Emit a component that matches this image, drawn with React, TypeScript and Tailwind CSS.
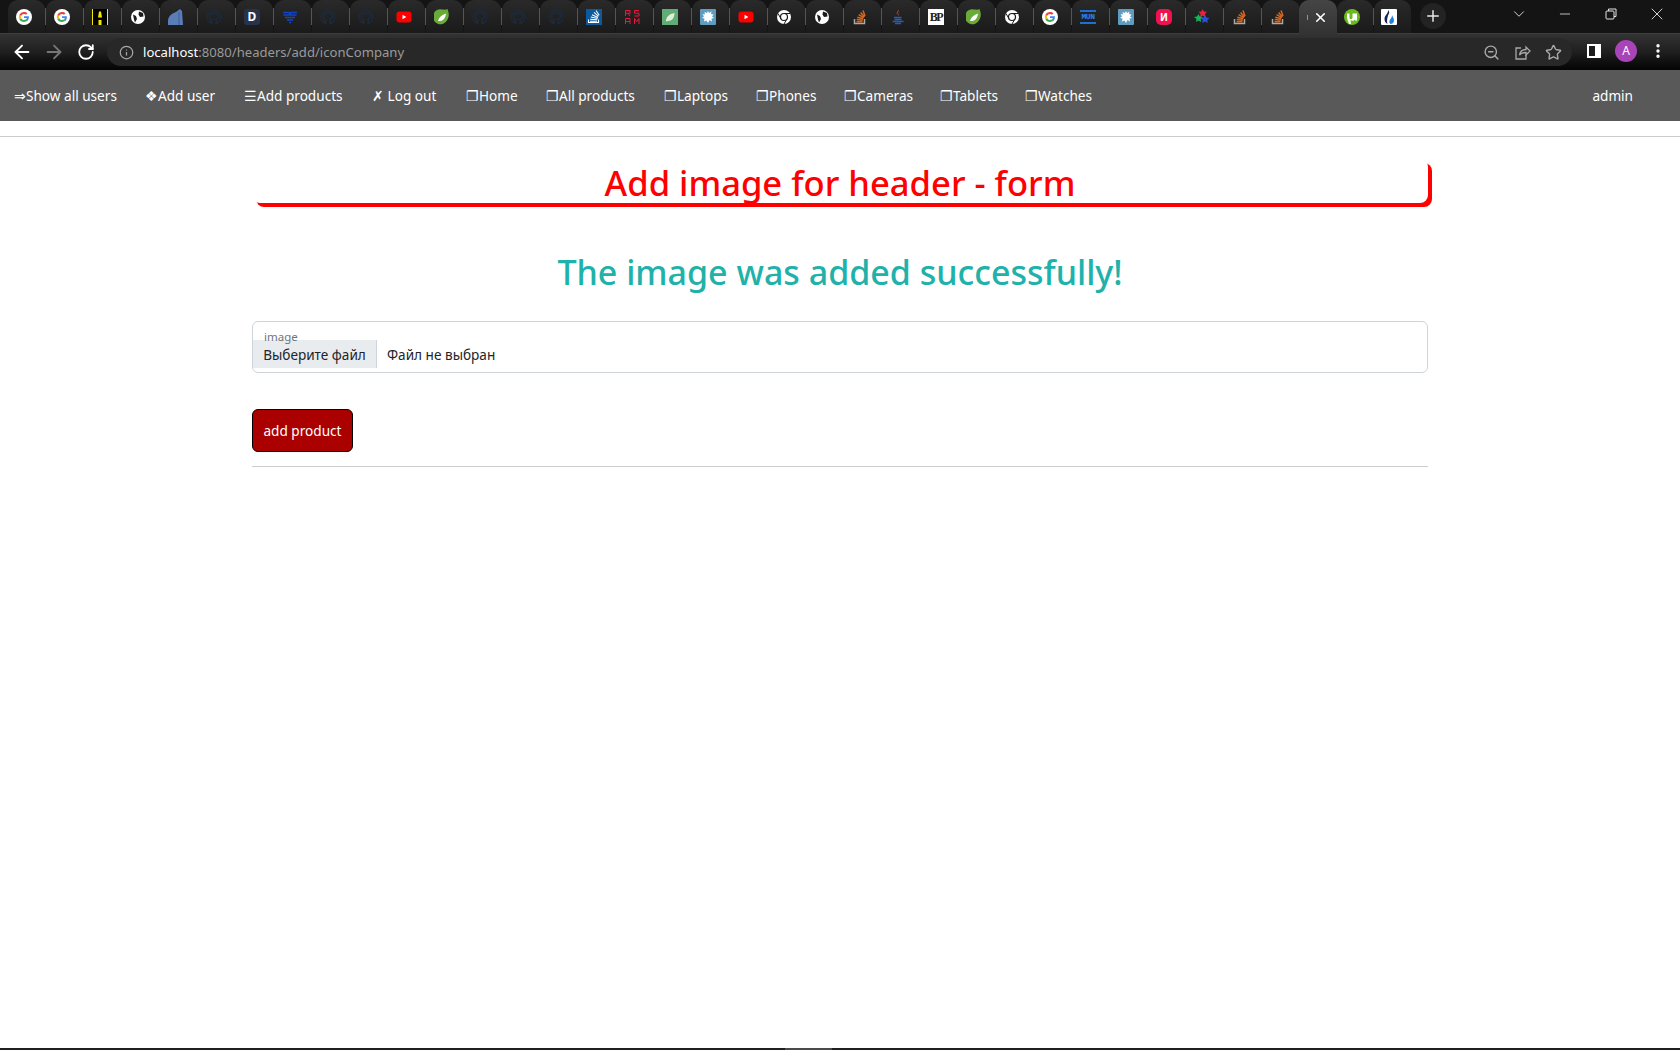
import { ArrowLeft, ArrowRight, RotateCw, Info, ZoomOut, Star, X, Plus, ChevronDown, Minus, MoreVertical } from 'lucide-react';

type IconName =
  | 'google' | 'amazon' | 'globe' | 'blue' | 'github' | 'dev' | 'heart' | 'youtube' | 'spring'
  | 'stackBlue' | 'rsam' | 'leaf' | 'splat' | 'chrome' | 'stack' | 'java' | 'bp' | 'mun' | 'red'
  | 'stars' | 'utorrent' | 'flame';

const tabsBefore: IconName[] = [
  'google', 'google', 'amazon', 'globe', 'blue', 'github', 'dev', 'heart', 'github', 'github',
  'youtube', 'spring', 'github', 'github', 'github', 'stackBlue', 'rsam', 'leaf', 'splat',
  'youtube', 'chrome', 'globe', 'stack', 'java', 'bp', 'spring', 'chrome', 'google', 'mun',
  'splat', 'red', 'stars', 'stack', 'stack',
];

const navItems = [
  { label: '⇒Show all users', width: 'w-[131px]' },
  { label: '❖Add user', width: 'w-[99px]' },
  { label: '☰Add products', width: 'w-[128px]' },
  { label: '✗ Log out', width: 'w-[94px]' },
  { label: '❐Home', width: 'w-[80px]' },
  { label: '❐All products', width: 'w-[118px]' },
  { label: '❐Laptops', width: 'w-[92px]' },
  { label: '❐Phones', width: 'w-[88px]' },
  { label: '❐Cameras', width: 'w-[96px]' },
  { label: '❐Tablets', width: 'w-[85px]' },
  { label: '❐Watches', width: 'w-[92px]' },
];

function StackMark({ color }: { color: string }) {
  return (
    <g stroke={color} strokeWidth="1.5" fill="none">
      <path d="M2.5 10v4.5h10V10" stroke="#a9a9a9" />
      <path d="M4.5 12.7h6M4.7 10.6l6 .6M5.3 8.2l5.9 1.6M6.6 5.7l5.2 3M8.6 3.5l3.9 4.4M11 1.5l2 5.5" />
    </g>
  );
}

function Favicon({ name }: { name: IconName }) {
  switch (name) {
    case 'google':
      return (
        <svg width="16" height="16" viewBox="0 0 16 16">
          <circle cx="8" cy="8" r="8" fill="#fff" />
          <path d="M12.9 8.2c0-.4 0-.7-.1-1H8v1.900h2.800c-.1.700-.5 1.200-1 1.600l1.600 1.200c.9-.9 1.500-2.200 1.500-3.700z" fill="#4285f4" />
          <path d="M8 13c1.400 0 2.500-.5 3.400-1.200L9.800 10.600c-.5.300-1 .5-1.800.5-1.300 0-2.500-.9-2.900-2.100L3.400 10.200C4.200 11.900 6 13 8 13z" fill="#34a853" />
          <path d="M5.100 9c-.2-.6-.2-1.300 0-1.900L3.400 5.800c-.7 1.400-.7 3 0 4.400z" fill="#fbbc05" />
          <path d="M8 4.900c.8 0 1.500.3 2 .8l1.500-1.500C10.600 3.500 9.400 3 8 3 6 3 4.200 4.100 3.400 5.800l1.700 1.300C5.500 5.800 6.700 4.900 8 4.900z" fill="#ea4335" />
        </svg>
      );
    case 'amazon':
      return (
        <svg width="16" height="16" viewBox="0 0 16 16">
          <rect width="16" height="16" fill="#f5e400" />
          <rect x="1" width="14" height="16" fill="#000" />
          <path d="M7 2.500h2l1 6H6zM6.500 11h3v5h-3z" fill="#f5e400" />
        </svg>
      );
    case 'globe':
      return (
        <svg width="16" height="16" viewBox="0 0 16 16">
          <circle cx="8" cy="8" r="7" fill="#fff" />
          <path d="M3 5.500l3 1.500 1 3-2 3.500-1-3zM9 2.500l4 1.500 .5 3.500-3.500.5-1.500-2.500z" fill="#1b1b1b" />
        </svg>
      );
    case 'blue':
      return (
        <svg width="16" height="16" viewBox="0 0 16 16">
          <path d="M0 16V11C1 6 5 4 8 3l4-3 2 2 1 14z" fill="#5a7db8" />
          <path d="M11 3v13" stroke="#3f5f96" strokeWidth="1" />
        </svg>
      );
    case 'github':
      return (
        <svg width="16" height="16" viewBox="0 0 16 16">
          <path d="M8 1a7 7 0 0 0-2.200 13.600v-2.200C3.500 12.900 3 11.500 3 11.500M8 1a7 7 0 0 1 2.200 13.600v-3c0-.7-.3-1.100-.6-1.400 1.800-.2 2.900-1 2.900-3 0-.8-.3-1.400-.7-1.900.1-.3.200-1-.1-1.800-.7 0-1.500.5-1.800.7a7 7 0 0 0-3.800 0C5.800 4.500 5 4 4.300 4c-.3.800-.2 1.500-.1 1.800-.4.500-.7 1.100-.7 1.900 0 2 1.100 2.800 2.900 3-.3.300-.4.600-.5 1" fill="none" stroke="#1d2a3a" strokeWidth="1.500" />
        </svg>
      );
    case 'dev':
      return (
        <span className="flex h-4 w-4 items-center justify-center rounded-[3px] bg-[#28324a] text-[12px] font-bold leading-none text-white">D</span>
      );
    case 'heart':
      return (
        <svg width="16" height="16" viewBox="0 0 16 16">
          <path d="M1 3.500h6l1 1.500 1-1.500h6M1.500 6h13M3 8.500h10M5 11h6M7 13.500h2" stroke="#1045c8" strokeWidth="1.500" fill="none" />
        </svg>
      );
    case 'youtube':
      return (
        <svg width="16" height="16" viewBox="0 0 16 16">
          <rect x="0.500" y="2.500" width="15" height="11" rx="3" fill="#ff0000" />
          <path d="M6.500 5.800v4.400L10.300 8z" fill="#fff" />
        </svg>
      );
    case 'spring':
      return (
        <svg width="16" height="16" viewBox="0 0 16 16">
          <path d="M8 0.500c2 0 4 .5 5.500-.5 1.500 4 2 7-.3 11A7.500 7.500 0 1 1 8 .5z" fill="#6aaa3a" />
          <path d="M4 12c1-4 4-6 8-7.500-.5 4-2 7-6 7.500-.8.100-1.500.2-2 0z" fill="#fff" />
        </svg>
      );
    case 'stackBlue':
      return (
        <svg width="16" height="16" viewBox="0 0 16 16">
          <rect width="16" height="16" fill="#0b5a9e" />
          <g stroke="#fff" strokeWidth="1.100" fill="none">
            <path d="M2.500 10.500v3h10v-3M4 12.300h7M4.200 10.300l7 .5M4.800 8l6.800 1.500M6 5.700l6 2.900M8 3.300l4.500 4M10 1.500l3.200 4.800" />
          </g>
        </svg>
      );
    case 'rsam':
      return (
        <svg width="16" height="16" viewBox="0 0 16 16">
          <g stroke="#f0163c" strokeWidth="1" fill="none">
            <path d="M1.500 7V1.500H6v2.800H1.500M4 4.300L6 7M15 1.500h-4.500v2.700H15V7h-4.500M1.500 15V9.500H6V15M1.500 12.500H6M10.500 15V9.500l2.200 3 2.300-3V15" />
          </g>
        </svg>
      );
    case 'leaf':
      return (
        <svg width="16" height="16" viewBox="0 0 16 16">
          <rect width="16" height="16" fill="#63ab74" />
          <path d="M4 12.500c0-4.500 3-7.500 8.500-8.500 0 5-2.500 8-6.500 8-.7 0-1.400.2-2 .5z" fill="#dcefdc" />
        </svg>
      );
    case 'splat':
      return (
        <svg width="16" height="16" viewBox="0 0 16 16">
          <rect width="16" height="16" rx="1" fill="#5f9dc0" />
          <path d="M8 2l1 2 2.500-1.500-.5 2.500 2.500.5-1.500 2L14 9l-2.500.5.5 3-2.500-1.500L8 14l-1.500-2.500L4 12.500l.5-3L2 9l2-1.500L2.500 5l2.500.5L4.500 3l2.500 1z" fill="#fff" />
        </svg>
      );
    case 'chrome':
      return (
        <svg width="16" height="16" viewBox="0 0 16 16">
          <circle cx="8" cy="8" r="7" fill="#fff" />
          <circle cx="8" cy="8" r="3.500" fill="#fff" stroke="#1c1c1c" strokeWidth="1.200" />
          <path d="M8 4.500h6M5 9.800L2 4.500M11 9.800L8 15" stroke="#1c1c1c" strokeWidth="1" />
        </svg>
      );
    case 'stack':
      return (
        <svg width="16" height="16" viewBox="0 0 16 16">
          <StackMark color="#d9661c" />
        </svg>
      );
    case 'java':
      return (
        <svg width="16" height="16" viewBox="0 0 16 16">
          <path d="M8.500 0.500c1 2-2 3-1 5.500-2-2 .5-3.500 1-5.500zM10 3.500c-1 1-2 2-.8 3.500-1.800-1 -1-2.500 .8-3.500z" fill="#d2532b" />
          <path d="M4 8.500h7.500M4.500 10.500h7M2.500 12.500h11M5 14.500h6" stroke="#2a5ca8" strokeWidth="1.300" />
        </svg>
      );
    case 'bp':
      return (
        <span className="flex h-4 w-4 items-center justify-center bg-white font-['Liberation_Serif',serif] text-[12px] font-bold leading-none tracking-[-1.500px] text-[#222]">BP</span>
      );
    case 'mun':
      return (
        <span className="flex h-[14px] w-4 items-center justify-center border-y-2 border-[#1e6fd0] font-['Liberation_Mono',monospace] text-[8px] font-bold leading-none tracking-[-0.500px] text-[#2a84ea]">MUN</span>
      );
    case 'red':
      return (
        <span className="flex h-4 w-4 items-center justify-center rounded-[5px] bg-[#f0124e] text-[10px] font-bold leading-none text-white">И</span>
      );
    case 'stars':
      return (
        <svg width="16" height="16" viewBox="0 0 16 16">
          <path d="M8.500 0l1.500 2.500 3 .3-2 2.200.5 3-3-1.300L6 8l.5-3-2-2.200 3-.3z" fill="#e0263c" />
          <path d="M4.500 5l1.300 2.500 3 .4-2.200 2 .5 3L4.500 11.500 2 13l.5-3L0 8l3-.5z" fill="#0cba5a" />
          <path d="M11 6l1.500 2.500 3 .4-2.200 2.100.5 3-2.800-1.500L8.200 14l.5-3-2.200-2.100 3-.4z" fill="#2f4fd8" />
        </svg>
      );
    case 'utorrent':
      return (
        <svg width="16" height="16" viewBox="0 0 16 16">
          <circle cx="8" cy="8" r="8" fill="#6bb91f" />
          <path d="M3 4.500h2.500v4.500c0 1.500 2.500 1.500 3 0V4.500H13v7h-2v-1c-1 1.500-3 1.500-4.500.8L7 15H5l-2-6z" fill="#fff" />
        </svg>
      );
    case 'flame':
      return (
        <svg width="16" height="16" viewBox="0 0 16 16">
          <rect width="16" height="16" rx="1" fill="#fff" />
          <path d="M7 1c1 3-3.500 5-3.500 9 0 2 1 4 3 5-1-3 0-8 1.500-10.500C8.500 3 8 2 7 1z" fill="#14235a" />
          <path d="M11 6c.5 2 2 3 2 5.500S11 15 9.500 15C8 14 8 12 9 10.500 10 9.500 11 8 11 6z" fill="#1c84e0" />
        </svg>
      );
  }
}

export default function App() {
  return (
    <div className="flex min-h-[1050px] flex-col bg-white font-['Noto_Sans',sans-serif]">
      {/* Tab strip */}
      <div className="flex h-[34px] items-stretch border-b border-[#3d3d3d] bg-[#141414] pl-2">
        {tabsBefore.map((icon, i) => (
          <div key={i} className="flex w-[38px] shrink-0 items-stretch">
            <div className="flex flex-1 items-center rounded-t-[10px] bg-gradient-to-b from-[#2a2a2a] to-[#1a1a1a] pl-[8px]">
              <Favicon name={icon} />
            </div>
            {i < tabsBefore.length - 1 && <div className="my-[8px] w-px bg-[#555]" />}
          </div>
        ))}
        <div className="-mb-px -ml-px flex w-[38px] shrink-0 items-center rounded-t-[10px] bg-gradient-to-b from-[#454545] to-[#333] pl-[8px]">
          <span className="h-[5px] w-px bg-[#5aa0e8]" />
          <X size={15} strokeWidth={2.500} className="ml-[5px] text-white" />
        </div>
        <div className="flex w-[36px] shrink-0 items-center rounded-t-[10px] bg-gradient-to-b from-[#2a2a2a] to-[#1a1a1a] pl-[7px]">
          <Favicon name="utorrent" />
        </div>
        <div className="my-[8px] w-px bg-[#555]" />
        <div className="flex w-[37px] shrink-0 items-center rounded-t-[10px] bg-gradient-to-b from-[#2a2a2a] to-[#1a1a1a] pl-[7px]">
          <Favicon name="flame" />
        </div>
        <div className="ml-[9px] mt-[3px] flex h-[26px] w-[26px] items-center justify-center rounded-full bg-[#232323]">
          <Plus size={18} strokeWidth={2} className="text-[#e8e8e8]" />
        </div>
        <div className="ml-auto flex items-start text-[#e5e5e5]">
          <div className="flex h-[28px] w-[46px] items-center justify-center">
            <ChevronDown size={18} strokeWidth={1.200} />
          </div>
          <div className="flex h-[28px] w-[46px] items-center justify-center">
            <Minus size={16} strokeWidth={1.200} />
          </div>
          <div className="flex h-[28px] w-[46px] items-center justify-center">
            <svg width="12" height="12" viewBox="0 0 12 12" fill="none" stroke="currentColor">
              <rect x="1" y="3" width="8" height="8" rx="1" />
              <path d="M3.500 3V1h7.500v7.500H9" />
            </svg>
          </div>
          <div className="flex h-[28px] w-[46px] items-center justify-center">
            <X size={20} strokeWidth={1.100} />
          </div>
        </div>
      </div>

      {/* Toolbar */}
      <div className="flex h-[36px] items-start bg-gradient-to-b from-[#333] via-[#1f1f1f] to-[#050505] pl-[6px]">
        <div className="flex h-[32px] items-center pt-[4px]">
          <span className="flex w-[32px] justify-center"><ArrowLeft size={22} strokeWidth={2} className="text-white" /></span>
          <span className="flex w-[32px] justify-center"><ArrowRight size={22} strokeWidth={2} className="text-[#777]" /></span>
          <span className="flex w-[32px] justify-center"><RotateCw size={18} strokeWidth={2.400} className="text-white" /></span>
        </div>
        <div className="ml-[5px] mt-[4px] flex h-[28px] w-[1465px] items-center rounded-full bg-[#282828] pl-[12px] pr-[10px]">
          <Info size={15} className="text-[#a8a8a8]" />
          <span className="ml-[9px] pt-[2px] text-[13.100px] leading-none text-white">
            localhost<span className="text-[#9a9a9a]">:8080/headers/add/iconCompany</span>
          </span>
          <div className="ml-auto flex items-center gap-[14px] text-[#a8a8a8]">
            <ZoomOut size={17} />
            <svg width="17" height="17" viewBox="0 0 17 17" fill="none" stroke="currentColor" strokeWidth="1.300">
              <path d="M7 4H2v11h10v-4" />
              <path d="M5.500 11c.5-3.500 3-5.500 6.500-5.500V3l4 4-4 4V8.500c-2.500 0-5 .5-6.500 2.500z" />
            </svg>
            <Star size={17} strokeWidth={2} />
          </div>
        </div>
        <div className="ml-[15px] mt-[10px] flex h-[14px] w-[14px] border-2 border-white bg-white">
          <span className="h-full w-[6px] bg-[#1c1c1c]" />
        </div>
        <div className="ml-[14px] mt-[6px] flex h-[22px] w-[22px] items-center justify-center rounded-full bg-[#a844b8] text-[12px] leading-none text-white">A</div>
        <MoreVertical size={18} strokeWidth={2.500} className="ml-[12px] mt-[8px] text-white" />
      </div>

      {/* Site nav */}
      <nav className="flex h-[51px] items-center bg-[#595959] pl-[14px] pr-[47px] pt-[2px] text-[13.600px] text-white">
        {navItems.map((item) => (
          <span key={item.label} className={`${item.width} whitespace-pre`}>{item.label}</span>
        ))}
        <span className="ml-auto">admin</span>
      </nav>

      <hr className="mt-[15px] border-t border-[#ccc]" />

      <main className="mx-auto w-[1176px] flex-1">
        {/* Title */}
        <h1 className="mt-[22px] h-[44px] rounded-lg bg-white text-center text-[34.600px] font-medium leading-[48px] text-[#ff0000] shadow-[4px_4px_0_#ff0000]">
          Add image for header - form
        </h1>

        <h2 className="mt-[44px] text-center text-[34px] font-medium leading-[50px] text-[#20b2aa]">
          The image was added successfully!
        </h2>

        {/* Upload form */}
        <div className="relative mt-[24px] h-[52px] rounded-md border border-[#ced4da] pt-[18px]">
          <label className="absolute left-[11px] top-[7px] text-[11.500px] leading-[16px] text-[#6c757d]">image</label>
          <div className="flex h-[28px] items-center text-[13.600px] text-[#212529]">
            <span className="flex h-full w-[124px] items-center justify-center border-r border-[#ced4da] bg-[#e9ecef] pt-[2px]">Выберите файл</span>
            <span className="ml-[10px] pt-[2px]">Файл не выбран</span>
          </div>
        </div>

        <button className="mt-[36px] flex h-[43px] w-[101px] items-center justify-center rounded-md border border-black bg-[#aa0000] pt-[2px] text-[13.600px] text-white">
          add product
        </button>

        <hr className="mt-[14px] border-t border-[#ccc]" />
      </main>

      {/* Taskbar edge */}
      <div className="flex h-[2px] bg-[#1f1f1f] pl-[785px]">
        <div className="h-full w-[47px] bg-[#4a4a4a]" />
      </div>
    </div>
  );
}
